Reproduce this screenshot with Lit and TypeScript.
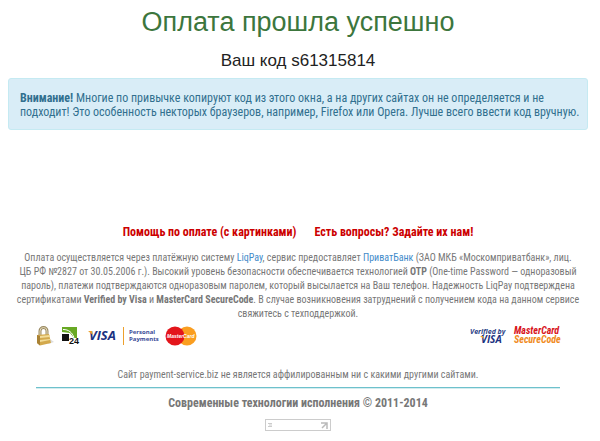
import { LitElement, html, css } from "lit";
import { customElement } from "lit/decorators.js";

@customElement("payment-logos")
export class PaymentLogos extends LitElement {
  static styles = css`
    :host {
      display: flex;
      justify-content: space-between;
    }
    .group {
      display: flex;
      align-items: center;
    }
    .group svg {
      display: block;
      flex: none;
      overflow: visible;
    }
    .methods {
      gap: 7px;
    }
    .secure {
      gap: 6px;
    }
    .visa {
      font: italic 700 13px "Open Sans", sans-serif;
      fill: #1b3281;
    }
    .personal {
      font: 700 6px "Open Sans", sans-serif;
      fill: #3a4c98;
    }
    .badge24 {
      font: 700 9px "Liberation Sans", sans-serif;
      fill: #111;
    }
    .card {
      font: italic 700 5px "Liberation Sans", sans-serif;
      fill: #fff;
    }
    .verified {
      font: italic 700 7px "Open Sans", sans-serif;
      fill: #2b4287;
    }
    .visaSmall {
      font: italic 700 10px "Open Sans", sans-serif;
      fill: #1b3281;
    }
    .master,
    .code {
      font: italic 700 10px "Roboto Condensed", Roboto, sans-serif;
    }
    .master {
      fill: #d8141c;
    }
    .code {
      fill: #f08a1c;
    }
  `;

  render() {
    return html`
      <div class="group methods">
        <svg width="18" height="20" viewBox="0 0 18 20" role="img" aria-label="Безопасно">
          <path d="M12 18l6-2-4-3z" fill="#ddd" />
          <path d="M4 10V5a3.500 3.500 0 0 1 7 0v5" fill="none" stroke="#9a8a62" stroke-width="3" />
          <path d="M4 9V5a3.500 3.500 0 0 1 7 0v4" fill="none" stroke="#e6dcbc" stroke-width="1" />
          <path d="M1 9l12-1 2 9-11 2.500L1 17z" fill="#d3a94c" />
          <path d="M1 9l3 1v9.500L1 17z" fill="#a98235" />
          <path d="M4 10l10-1v2L4 12zM4 14l10-1v1L4 16z" fill="#f2dc98" />
        </svg>
        <svg width="20" height="20" viewBox="0 0 20 20" role="img" aria-label="Приват24">
          <path d="M1 1h15v11h-3L9 7 1 6z" fill="#68a924" />
          <path d="M2 3.500c6 0 9 3 11 8" fill="none" stroke="#fff" stroke-width="1" />
          <rect x="1" y="8" width="7" height="7" fill="#111" />
          <text class="badge24" x="8" y="18">24</text>
        </svg>
        <svg width="70" height="20" viewBox="0 0 70 20" role="img" aria-label="Visa Personal Payments">
          <text class="visa" x="1" y="14">VISA</text>
          <path d="M0 5h4l1 4z" fill="#eda02c" />
          <path d="M35.500 1v18" stroke="#eda02c" />
          <text class="personal" x="41" y="8">Personal</text>
          <text class="personal" x="41" y="15">Payments</text>
        </svg>
        <svg width="32" height="20" viewBox="0 0 32 20" role="img" aria-label="MasterCard">
          <circle cx="22" cy="10" r="9.500" fill="#fa9e20" />
          <circle cx="10" cy="10" r="9.500" fill="#e3151b" />
          <text class="card" x="2" y="12">MasterCard</text>
        </svg>
      </div>
      <div class="group secure">
        <svg width="38" height="20" viewBox="0 0 38 20" role="img" aria-label="Verified by Visa">
          <text class="verified" x="0" y="8">Verified by</text>
          <text class="visaSmall" x="11" y="17">VISA</text>
          <path d="M10 10h3l1 3z" fill="#eda02c" />
        </svg>
        <svg width="46" height="20" viewBox="0 0 46 20" role="img" aria-label="MasterCard SecureCode">
          <text class="master" x="0" y="8">MasterCard</text>
          <text class="code" x="0" y="17">SecureCode</text>
        </svg>
      </div>
    `;
  }
}

@customElement("app-root")
export class AppRoot extends LitElement {
  static styles = css`
    :host {
      display: block;
      box-sizing: border-box;
      padding: 0 12px 0 8px;
      background: #fff;
      color: #777;
      font: 10px/14px "Roboto Condensed", Roboto, sans-serif;
      text-align: center;
    }
    a {
      color: #428bca;
      text-decoration: none;
    }
    h1,
    h2,
    p {
      margin: 0;
      font-weight: 400;
    }
    h1 {
      padding-top: 4px;
      color: #3c763d;
      font: 27px/36px "Liberation Sans", sans-serif;
    }
    h2 {
      margin: 10px 0 6px;
      color: #222;
      font: 17px/22px "Liberation Sans", sans-serif;
    }
    .alert {
      padding: 12px 4px 10px 11px;
      border: 1px solid #c5eaf2;
      border-radius: 3px;
      background: #d9edf7;
      color: #31708f;
      font-size: 12px;
      text-align: left;
    }
    .help {
      display: flex;
      justify-content: center;
      gap: 18px;
      margin-top: 95px;
      font-size: 12px;
      font-weight: 700;
    }
    .help a {
      color: #c00;
    }
    .about {
      margin-top: 12px;
      padding: 0 6px;
    }
    payment-logos {
      margin: 5px 28px 0;
    }
    .note {
      margin-top: 22px;
    }
    hr {
      height: 1px;
      margin: 5px 28px 7px;
      border: 0;
      border-bottom: 1px solid #d3ecef;
      background: #6ec1cc;
    }
    .copy {
      font-size: 12px;
      font-weight: 700;
    }
    .counter {
      display: flex;
      align-items: center;
      justify-content: space-between;
      box-sizing: border-box;
      width: 66px;
      height: 12px;
      margin: 9px auto 0;
      padding: 0 2px;
      border: 1px solid #ccc;
    }
  `;

  render() {
    return html`
      <h1>Оплата прошла успешно</h1>
      <h2>Ваш код s61315814</h2>
      <div class="alert" role="status">
        <strong>Внимание!</strong> Многие по привычке копируют код из этого окна, а на других сайтах он не определяется и не
        подходит! Это особенность некторых браузеров, например, Firefox или Opera. Лучше всего ввести код вручную.
      </div>
      <nav class="help">
        <a href="#help">Помощь по оплате (с картинками)</a>
        <a href="#ask">Есть вопросы? Задайте их нам!</a>
      </nav>
      <p class="about">
        Оплата осуществляется через платёжную систему <a href="#liqpay">LiqPay</a>, сервис предоставляет
        <a href="#privatbank">ПриватБанк</a> (ЗАО МКБ «Москомприватбанк», лиц. ЦБ&nbsp;РФ №2827 от 30.05.2006 г.). Высокий
        уровень безопасности обеспечивается технологией <b>OTP</b> (One-time Password — одноразовый пароль), платежи
        подтверждаются одноразовым паролем, который высылается на Ваш телефон. Надежность LiqPay подтверждена
        сертификатами <b>Verified by Visa</b> и <b>MasterCard SecureCode</b>. В случае возникновения затруднений с
        получением кода на данном сервисе свяжитесь с техподдержкой.
      </p>
      <payment-logos></payment-logos>
      <p class="note">Сайт payment-service.biz не является аффилированным ни с какими другими сайтами.</p>
      <hr />
      <p class="copy">Современные технологии исполнения © 2011-2014</p>
      <a class="counter" href="#stats" aria-label="Статистика">
        <svg width="4" height="4" viewBox="0 0 4 4"><path d="M0 .5h4M0 3.500h4M1 2h3" stroke="#ccc" /></svg>
        <svg width="7" height="7" viewBox="0 0 7 7">
          <path d="M0 1h6v6M6 1L1 6" fill="none" stroke="#bbb" stroke-width="1.500" />
        </svg>
      </a>
    `;
  }
}
